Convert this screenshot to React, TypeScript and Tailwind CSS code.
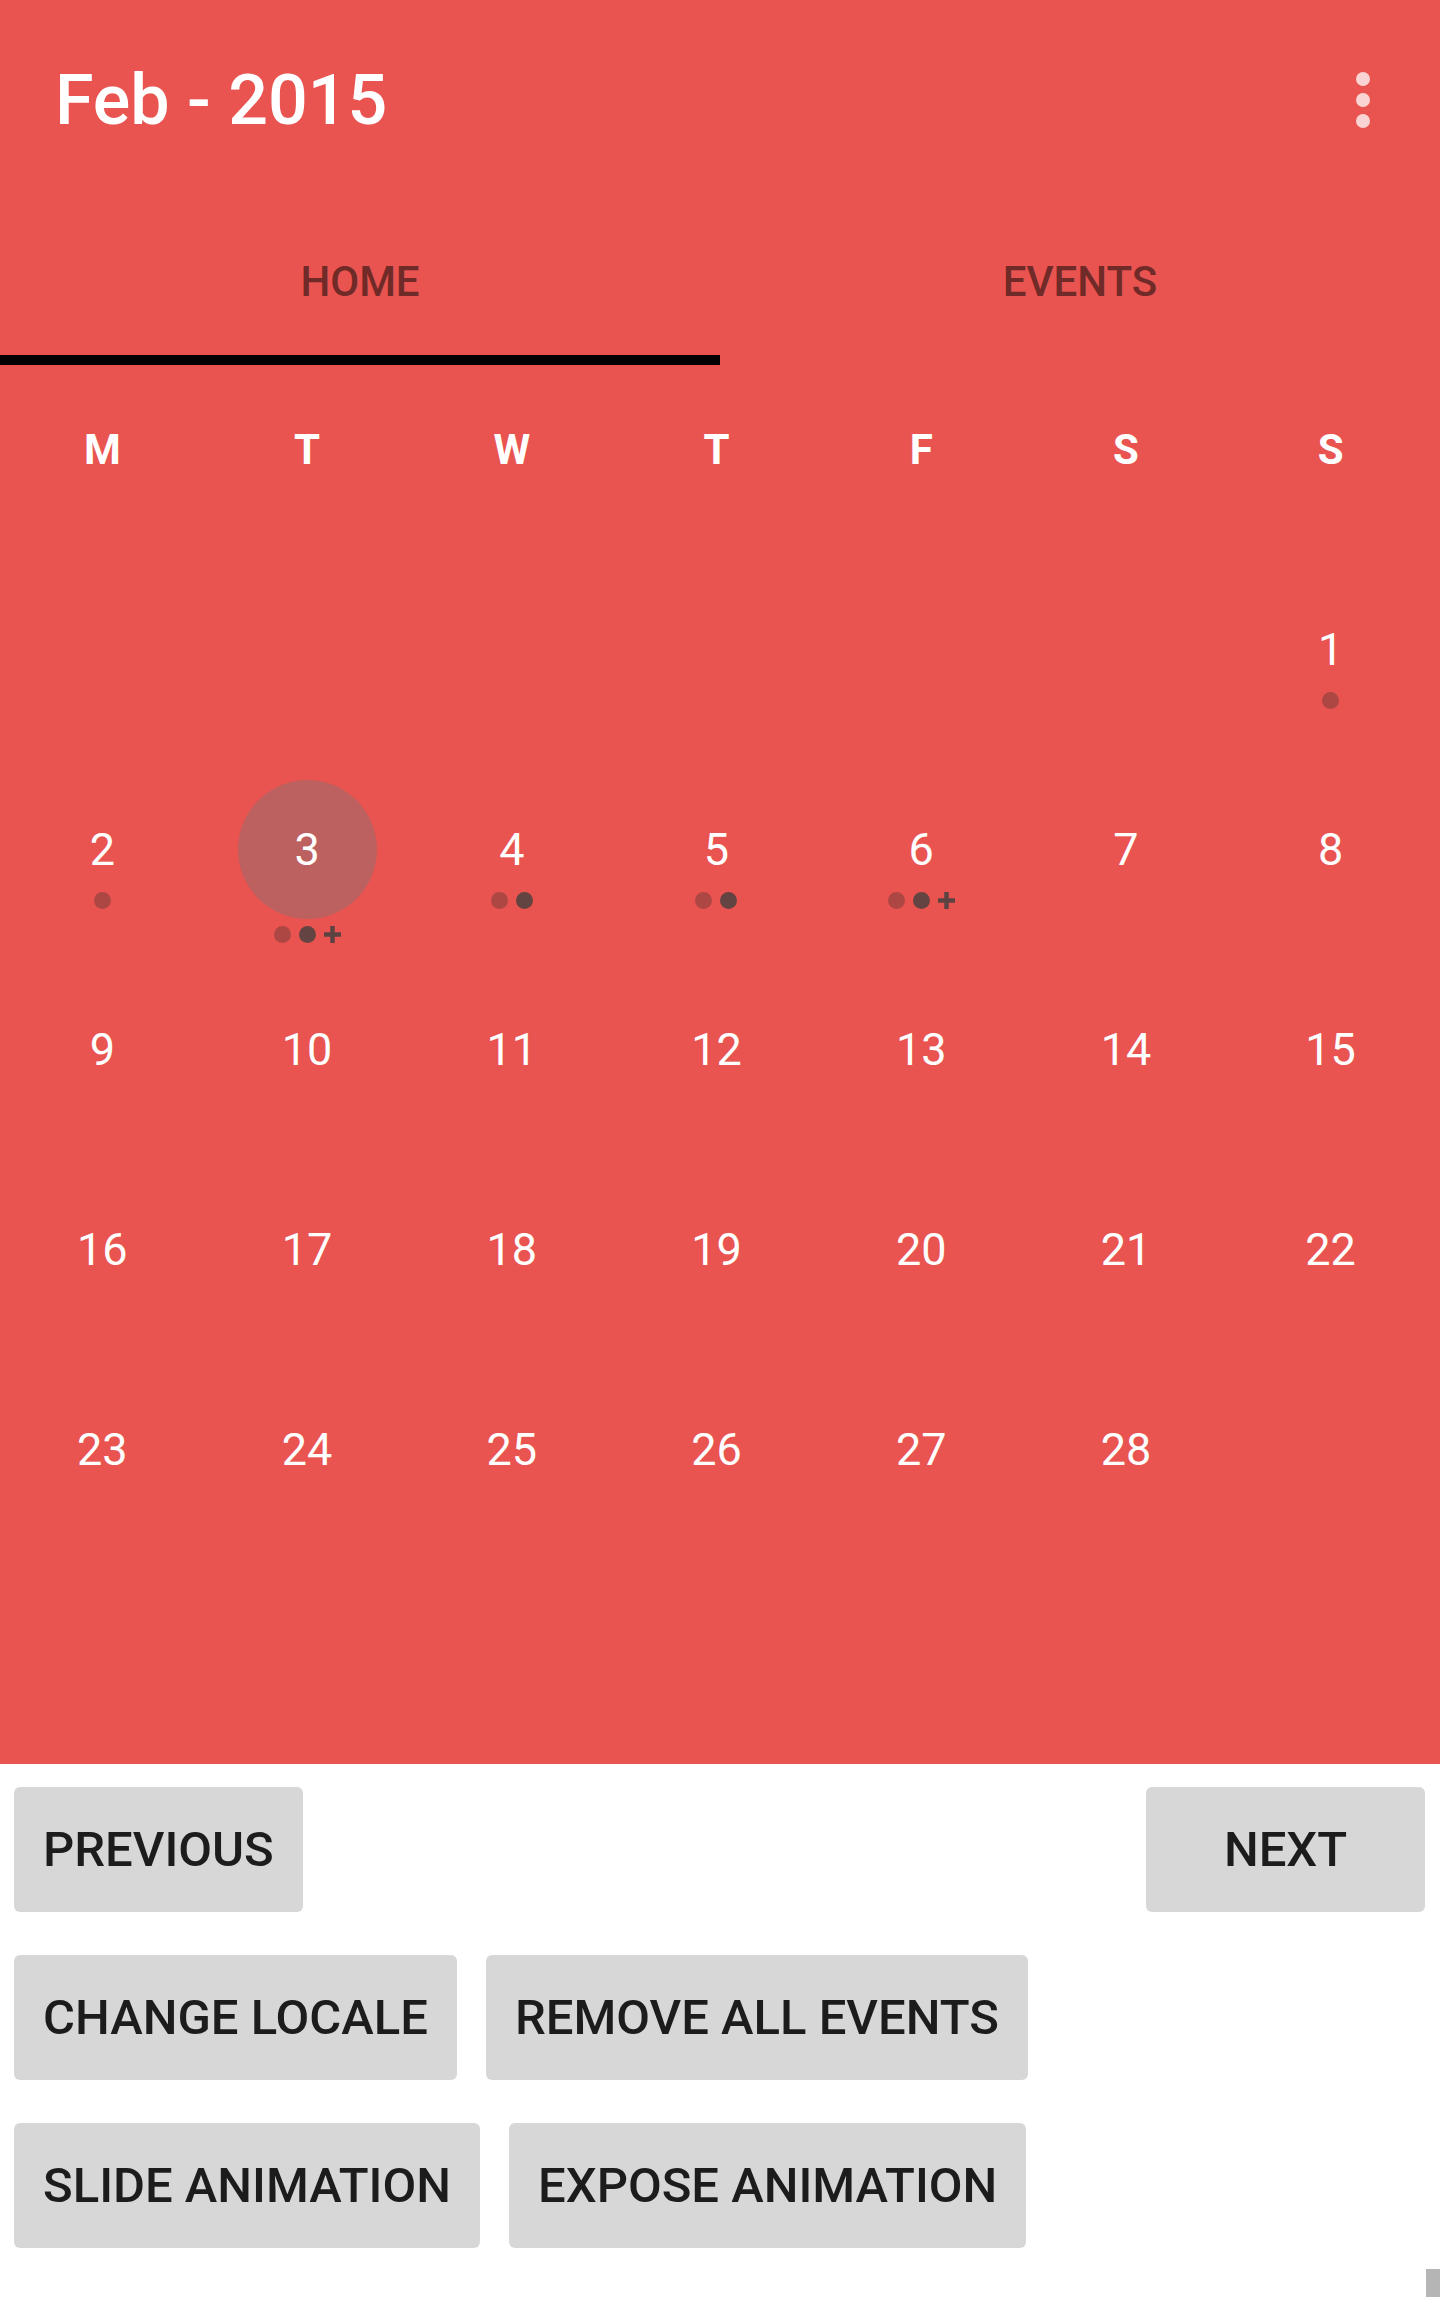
import React from 'react';

type Mark = 'light' | 'dark' | 'more';

const WEEKDAYS = ['M', 'T', 'W', 'T', 'F', 'S', 'S'];

const WEEKS: (number | null)[][] = [
  [null, null, null, null, null, null, 1],
  [2, 3, 4, 5, 6, 7, 8],
  [9, 10, 11, 12, 13, 14, 15],
  [16, 17, 18, 19, 20, 21, 22],
  [23, 24, 25, 26, 27, 28, null],
];

const EVENTS: Record<number, Mark[]> = {
  1: ['light'],
  2: ['light'],
  3: ['light', 'dark', 'more'],
  4: ['light', 'dark'],
  5: ['light', 'dark'],
  6: ['light', 'dark', 'more'],
};

const SELECTED = 3;

const EventMark: React.FC<{ mark: Mark }> = ({ mark }) => {
  if (mark === 'more') {
    return (
      <svg width="17" height="17" viewBox="0 0 17 17">
        <rect x="6.25" y="0" width="4.5" height="17" fill="#5c4341" />
        <rect x="0" y="6.25" width="17" height="4.5" fill="#5c4341" />
      </svg>
    );
  }
  return (
    <div
      className={`w-[17px] h-[17px] rounded-full ${
        mark === 'light' ? 'bg-[#ad4744]' : 'bg-[#644442]'
      }`}
    />
  );
};

const DayCell: React.FC<{ day: number | null }> = ({ day }) => {
  if (day === null) return <div className="h-[200px]" />;
  const selected = day === SELECTED;
  const marks = EVENTS[day] || [];

  return (
    <div className="h-[200px] pt-[30px] flex flex-col items-center">
      <div
        className={`w-[139px] h-[139px] rounded-full flex items-center justify-center text-[45px] leading-none text-white ${
          selected ? 'bg-[#bd6060]' : ''
        }`}
      >
        {day}
      </div>
      {marks.length > 0 && (
        <div
          className={`flex items-center gap-[8px] h-[17px] ${
            selected ? 'mt-[7px]' : '-mt-[27px]'
          }`}
        >
          {marks.map((m, i) => (
            <EventMark key={i} mark={m} />
          ))}
        </div>
      )}
    </div>
  );
};

const ActionButton: React.FC<{ label: string }> = ({ label }) => (
  <button className="h-[125px] min-w-[279px] px-[29px] rounded-[6px] bg-[#d6d7d6] text-[#1c1c1c] text-[49px] leading-none font-medium">
    {label}
  </button>
);

const App: React.FC = () => {
  return (
    <div className="relative w-[1440px] h-[2308px] bg-white font-[Roboto,sans-serif] overflow-hidden">
      {/* Calendar header + month grid */}
      <div className="bg-[#e95450] pb-[214px]">
        <div className="h-[200px] flex items-center justify-between pl-[55px] pr-[70px]">
          <h1 className="text-[70px] leading-none font-medium text-white">Feb - 2015</h1>
          <svg width="14" height="56" viewBox="0 0 14 56" className="opacity-75">
            <circle cx="7" cy="7" r="7" fill="#fff" />
            <circle cx="7" cy="28" r="7" fill="#fff" />
            <circle cx="7" cy="49" r="7" fill="#fff" />
          </svg>
        </div>

        <div className="flex h-[165px]">
          {['HOME', 'EVENTS'].map((tab, i) => (
            <div key={tab} className="flex-1 flex flex-col justify-between">
              <div className="pt-[61px] text-center text-[42px] leading-none font-medium text-[#702a28]">
                {tab}
              </div>
              <div className={`h-[10px] ${i === 0 ? 'bg-black' : ''}`} />
            </div>
          ))}
        </div>

        <div className="w-[1433px]">
          <div className="grid grid-cols-7 h-[185px]">
            {WEEKDAYS.map((d, i) => (
              <div key={i} className="pt-[64px] text-center text-[42px] leading-none font-bold text-white">
                {d}
              </div>
            ))}
          </div>

          {WEEKS.map((week, w) => (
            <div key={w} className="grid grid-cols-7">
              {week.map((day, i) => (
                <DayCell key={i} day={day} />
              ))}
            </div>
          ))}
        </div>
      </div>

      {/* Controls */}
      <div className="pt-[23px] px-[14px] flex flex-col gap-[43px]">
        <div className="flex justify-between pr-px">
          <ActionButton label="PREVIOUS" />
          <ActionButton label="NEXT" />
        </div>
        <div className="flex gap-[29px]">
          <ActionButton label="CHANGE LOCALE" />
          <ActionButton label="REMOVE ALL EVENTS" />
        </div>
        <div className="flex gap-[29px]">
          <ActionButton label="SLIDE ANIMATION" />
          <ActionButton label="EXPOSE ANIMATION" />
        </div>
      </div>

      {/* scroll indicator */}
      <div className="absolute right-0 top-[2269px] w-[14px] h-[28px] bg-[#b5b5b5]" />
    </div>
  );
};

export default App;
